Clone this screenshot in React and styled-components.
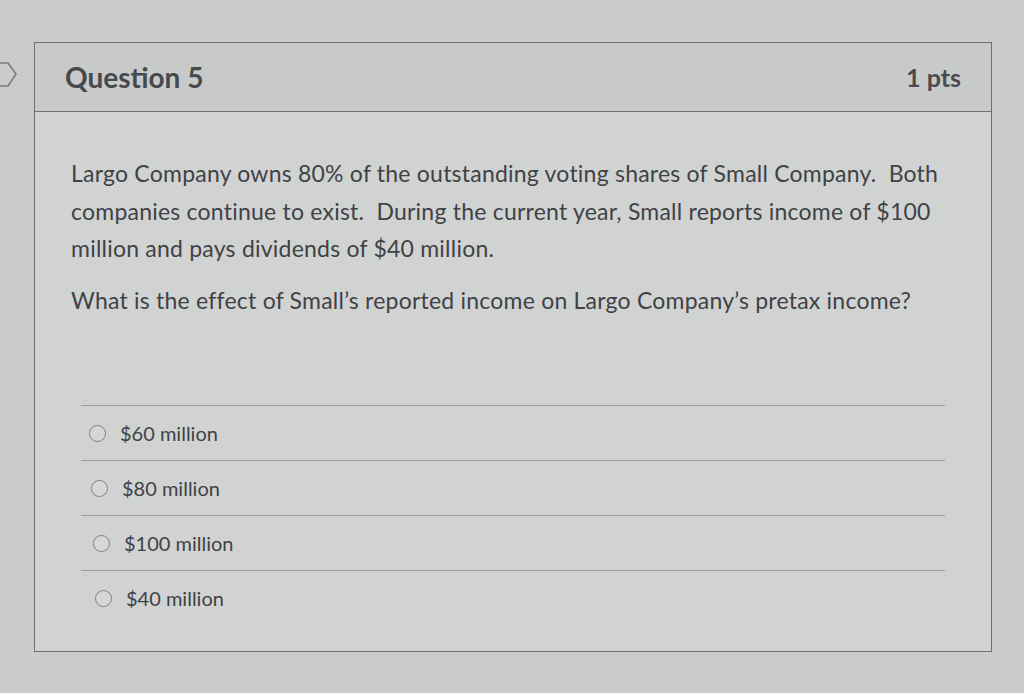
import styled, { createGlobalStyle } from "styled-components";

const GlobalStyle = createGlobalStyle`
  html, body {
    margin: 0;
    padding: 0;
    background: #c9cbcc;
    font-family: Lato, "Open Sans", "Liberation Sans", sans-serif;
    color: #3e4042;
  }
`;

const Page = styled.div`
  width: 1024px;
  height: 693px;
  display: flex;
  align-items: flex-start;
  padding: 42px 0 0 0;
  box-sizing: border-box;
  overflow: hidden;
`;

const Gutter = styled.div`
  width: 34px;
  flex-shrink: 0;
  display: flex;
  justify-content: flex-start;
  padding-top: 19px;
  svg {
    margin-left: -2px;
  }
`;

const Card = styled.section`
  width: 958px;
  height: 610px;
  box-sizing: border-box;
  border: 1px solid #6d6f71;
  background: #d1d3d3;
  display: flex;
  flex-direction: column;
`;

const Header = styled.header`
  height: 69px;
  box-sizing: border-box;
  display: flex;
  align-items: center;
  justify-content: space-between;
  padding: 0 30px 0 30px;
  background: #c8caca;
  border-bottom: 1px solid #6d6f71;
`;

const Title = styled.h2`
  margin: 0;
  font-size: 28px;
  font-weight: 700;
  color: #47494c;
`;

const Points = styled.span`
  font-size: 25px;
  font-weight: 700;
  color: #4a4c4f;
`;

const Body = styled.div`
  padding: 43px 36px 0 36px;
  display: flex;
  flex-direction: column;
`;

const Text = styled.p`
  margin: 0 0 14px 0;
  font-size: 23px;
  letter-spacing: 0.22px;
  line-height: 37.5px;
  color: #404245;
`;

const Options = styled.ul`
  list-style: none;
  margin: 72px 10px 0 10px;
  padding: 0;
`;

const Option = styled.li`
  height: 54px;
  border-top: 1px solid #9a9c9e;
  display: flex;
  align-items: center;
  gap: 14px;
  padding-left: ${({ $indent }) => $indent}px;
  font-size: 20px;
  color: #404245;
`;

const Radio = styled.span`
  width: 15px;
  height: 15px;
  border-radius: 50%;
  border: 1.5px solid #7e8082;
  background: #d6d8d8;
  flex-shrink: 0;
`;

const answers = ["$60 million", "$80 million", "$100 million", "$40 million"];

const App = () => {
  return (
    <Page>
      <GlobalStyle />
      <Gutter>
        <svg width="20" height="28" viewBox="0 0 20 28">
          <path
            d="M-4 2 H10 L18 13 L10 25 H-4"
            fill="none"
            stroke="#7b7d80"
            strokeWidth="1.6"
            strokeLinejoin="round"
          />
        </svg>
      </Gutter>
      <Card>
        <Header>
          <Title>Question 5</Title>
          <Points>1 pts</Points>
        </Header>
        <Body>
          <Text>
            Largo Company owns 80% of the outstanding voting shares of Small Company.{"\u00a0"} Both
            companies continue to exist.{"\u00a0"} During the current year, Small reports income of $100
            million and pays dividends of $40 million.
          </Text>
          <Text>What is the effect of Small’s reported income on Largo Company’s pretax income?</Text>
          <Options>
            {answers.map((a, i) => (
              <Option key={a} $indent={8 + i * 2}>
                <Radio />
                {a}
              </Option>
            ))}
          </Options>
        </Body>
      </Card>
    </Page>
  );
};

export default App;
